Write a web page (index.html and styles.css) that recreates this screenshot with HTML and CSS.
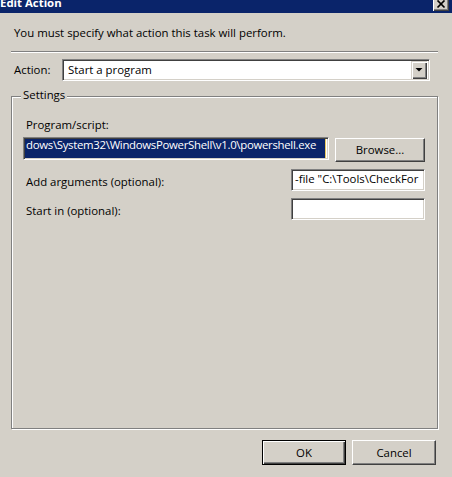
FILE: index.html
```html
<!DOCTYPE html>
<html lang="en">
<head>
<meta charset="utf-8">
<title>Edit Action</title>
<link rel="stylesheet" href="styles.css">
</head>
<body>
<div class="window">
  <div class="titlebar">
    <span class="title">Edit Action</span>
    <span class="close"><svg width="16" height="14" viewBox="0 0 16 14"><path d="M4.5 3.5 L11.5 10.5 M11.5 3.5 L4.5 10.5" stroke="#000" stroke-width="1.7" fill="none"/></svg></span>
  </div>
  <p class="intro">You must specify what action this task will perform.</p>
  <div class="sep"></div>
  <div class="action-row">
    <span class="action-label">Action:</span>
    <div class="combo">
      <span class="combo-text">Start a program</span>
      <span class="drop"><svg width="12" height="14" viewBox="0 0 12 14"><polygon points="2.5,5 9.5,5 6,8.5" fill="#000"/></svg></span>
    </div>
  </div>
  <fieldset class="group">
    <legend class="legend">Settings</legend>
    <div class="field-label">Program/script:</div>
    <div class="prog-row">
      <div class="textbox prog"><span class="sel">dows\System32\WindowsPowerShell\v1.0\powershell.exe</span><span class="caret"></span></div>
      <div class="button browse">Browse...</div>
    </div>
    <div class="opt-row first">
      <span class="opt-label">Add arguments (optional):</span>
      <div class="textbox opt"><span class="opt-text">-file "C:\Tools\CheckFor</span></div>
    </div>
    <div class="opt-row">
      <span class="opt-label">Start in (optional):</span>
      <div class="textbox opt"><span class="opt-text"></span></div>
    </div>
  </fieldset>
  <div class="buttons">
    <div class="button default">OK</div>
    <div class="button cancel">Cancel</div>
  </div>
</div>
</body>
</html>
```

FILE: styles.css
```css
html, body {
  margin: 0;
  padding: 0;
}
body {
  width: 452px;
  height: 477px;
  overflow: hidden;
  background: #d4d0c8;
  font-family: "Open Sans", "Noto Sans", sans-serif;
  font-size: 11.4px;
  color: #000;
}
.window {
  width: 452px;
  height: 477px;
  display: flex;
  flex-direction: column;
}
.titlebar {
  height: 13px;
  flex: none;
  background: #0a246a;
  display: flex;
  justify-content: space-between;
  align-items: flex-start;
  overflow: hidden;
}
.title {
  color: #fff;
  font-weight: bold;
  line-height: 13px;
  margin-top: -4px;
  margin-left: 0;
  white-space: nowrap;
}
.close {
  width: 16px;
  height: 14px;
  margin-top: -3px;
  margin-right: 3px;
  box-sizing: border-box;
  background: #d4d0c8;
  box-shadow: inset 1px 1px #fff, inset -1px -1px #404040, inset -2px -2px #808080;
  display: flex;
}
.intro {
  margin: 13px 0 0 14px;
  line-height: 14px;
  white-space: nowrap;
}
.sep {
  margin: 11px 0 0 11px;
  width: 427px;
  height: 0;
  border-top: 1px solid #808080;
  border-bottom: 1px solid #fff;
}
.action-row {
  margin: 6px 0 0 14px;
  display: flex;
  align-items: center;
  height: 22px;
}
.action-label {
  width: 48px;
  line-height: 14px;
}
.combo {
  width: 368px;
  height: 22px;
  box-sizing: border-box;
  background: #fff;
  border: 1px solid;
  border-color: #808080 #fff #fff #808080;
  box-shadow: inset 1px 1px #404040, inset -1px -1px #d4d0c8;
  display: flex;
  align-items: center;
  padding: 1px 2px 1px 1px;
}
.combo-text {
  flex: 1;
  padding-left: 4px;
  line-height: 14px;
}
.drop {
  width: 16px;
  height: 18px;
  box-sizing: border-box;
  background: #d4d0c8;
  box-shadow: inset 1px 1px #d4d0c8, inset 2px 2px #fff, inset -1px -1px #404040, inset -2px -2px #808080;
  display: flex;
  align-items: center;
  justify-content: center;
}
.group {
  margin: 7px 0 0 11px;
  width: 427px;
  height: 341px;
  box-sizing: border-box;
  min-width: 0;
  padding: 0;
  border: 1px solid #808080;
  box-shadow: inset 1px 1px #fff, 1px 1px #fff;
}
.legend {
  margin-left: 9px;
  padding: 0 2px 3px 2px;
  line-height: 14px;
  background: #d4d0c8;
}
.field-label {
  margin: 13px 0 0 14px;
  line-height: 14px;
}
.prog-row {
  margin: 6px 0 0 11px;
  display: flex;
  align-items: flex-start;
  gap: 6px;
}
.textbox {
  box-sizing: border-box;
  background: #fff;
  border: 1px solid;
  border-color: #808080 #fff #fff #808080;
  box-shadow: inset 1px 1px #404040, inset -1px -1px #d4d0c8;
  padding: 1px;
  display: flex;
}
.prog {
  width: 306px;
  height: 23px;
  margin-top: -1px;
}
.sel {
  flex: 1;
  min-width: 0;
  background: #0a246a;
  color: #fff;
  line-height: 10px;
  padding-top: 1px;
  letter-spacing: -0.3px;
  white-space: nowrap;
  padding-left: 1px;
}
.caret {
  width: 1px;
  background: #e8c860;
  margin-right: 1px;
}
.button {
  box-sizing: border-box;
  background: #d4d0c8;
  border: 1px solid;
  border-color: #fff #404040 #404040 #fff;
  box-shadow: inset -1px -1px #808080;
  display: flex;
  align-items: center;
  justify-content: center;
  line-height: 14px;
}
.browse {
  width: 90px;
  height: 24px;
}
.opt-row {
  margin: 7px 12px 0 14px;
  display: flex;
  align-items: flex-start;
  justify-content: space-between;
}
.opt-label {
  margin-top: 6px;
  line-height: 14px;
  white-space: nowrap;
}
.opt {
  width: 134px;
  height: 22px;
  padding: 2px 1px 1px 3px;
  overflow: hidden;
}
.opt-text {
  line-height: 14px;
  white-space: nowrap;
}
.buttons {
  margin: 11px 16px 0 0;
  display: flex;
  justify-content: flex-end;
  gap: 6px;
}
.buttons .button {
  width: 84px;
  height: 25px;
}
.button.default {
  border: 1px solid #000;
  box-shadow: inset 1px 1px #fff, inset -1px -1px #404040, inset -2px -2px #808080;
}
```
